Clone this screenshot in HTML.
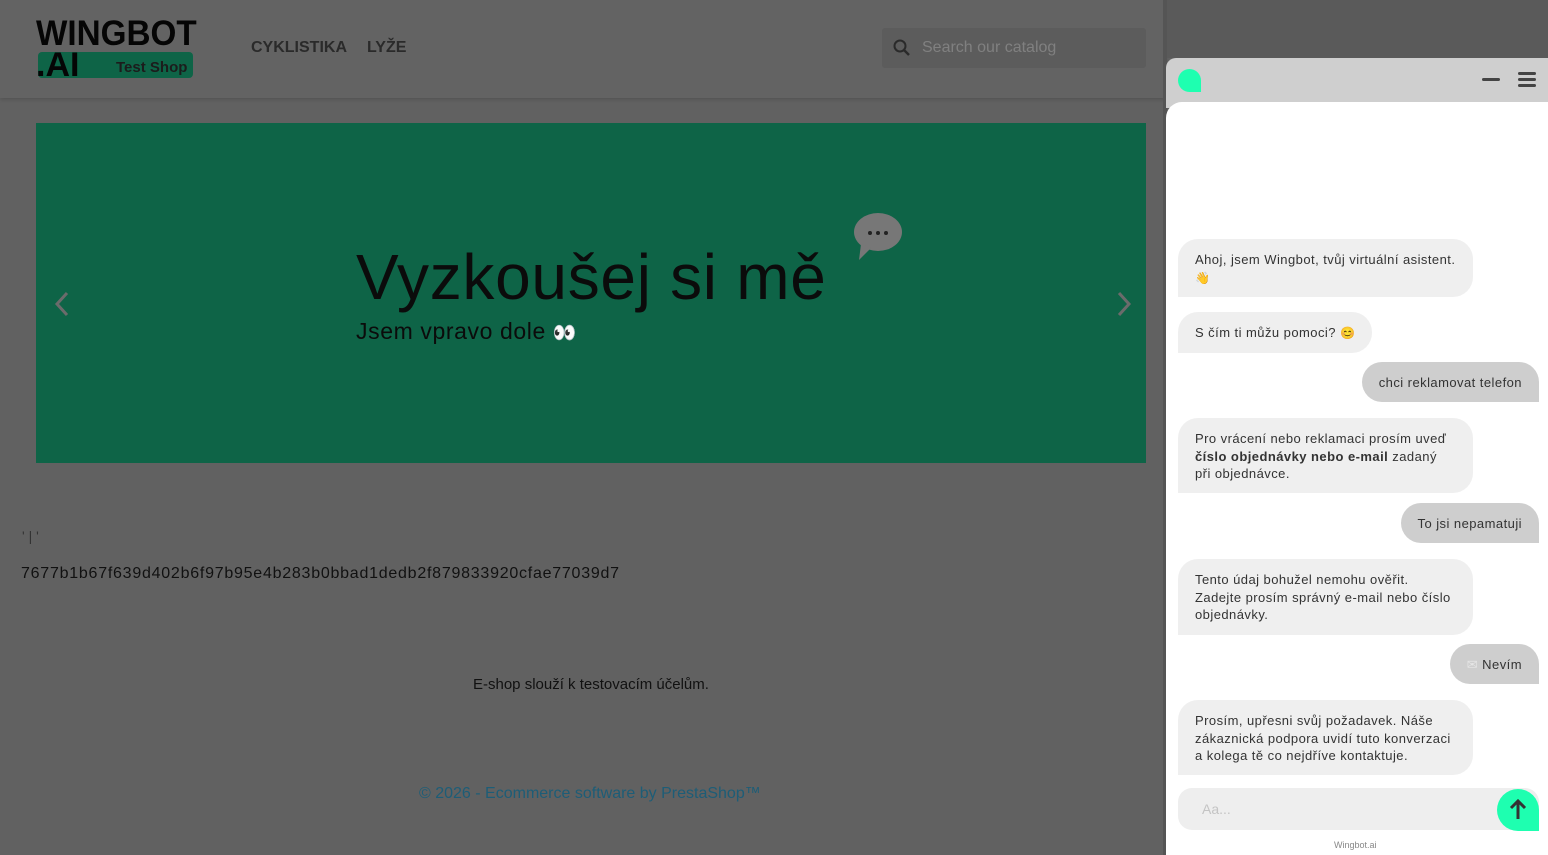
<!DOCTYPE html>
<html><head><meta charset="utf-8"><style>
*{margin:0;padding:0;box-sizing:border-box}
body{width:1548px;height:855px;overflow:hidden;background:#616161;font-family:"Liberation Sans",sans-serif;position:relative}
.hdr{position:absolute;left:0;top:0;width:1166px;height:98px;background:#636363;box-shadow:0 2px 3px rgba(0,0,0,.12)}
.logo1{position:absolute;left:36px;top:14px;font-size:35px;font-weight:bold;color:#050505;transform:scaleX(0.95);transform-origin:left}
.logobar{position:absolute;left:38px;top:52px;width:155px;height:26px;background:#0e6447;border-radius:4px}
.logoai{position:absolute;left:36px;top:46px;font-size:34px;font-weight:bold;color:#050505;height:32px;overflow:hidden;line-height:38px}
.logots{position:absolute;left:116px;top:59px;font-size:15px;font-weight:bold;color:#1c1c1c}
.nav{position:absolute;top:39px;font-size:16px;font-weight:bold;color:#2a2a2a}
.search{position:absolute;left:882px;top:28px;width:264px;height:40px;background:#5c5c5c;border-radius:3px}
.search span{position:absolute;left:40px;top:11px;font-size:16px;color:#808080}
.banner{position:absolute;left:36px;top:123px;width:1110px;height:340px;background:#0e6447}
.t1{position:absolute;left:356px;top:240px;font-size:64px;color:#0b0b0b;letter-spacing:0.7px}
.t2{position:absolute;left:356px;top:318px;font-size:23px;color:#0b0b0b;letter-spacing:0.6px}
.chatbg{position:absolute;left:1166px;top:0;width:382px;height:58px;background:#5a5a5a}
.edge{position:absolute;left:1163px;top:0;width:4px;height:855px;background:#555}
.chead{position:absolute;left:1166px;top:58px;width:382px;height:50px;background:#cfcfcf;border-top-left-radius:10px}
.cbody{position:absolute;left:1166px;top:102px;width:382px;height:753px;background:#fff;border-top-left-radius:16px}
.b{position:absolute;background:#efefef;color:#333;font-size:13px;letter-spacing:0.45px;line-height:17.5px;padding:12px 17px;border-radius:20px 20px 20px 0}
.u{position:absolute;background:#cecece;color:#333;font-size:13px;letter-spacing:0.45px;line-height:17px;padding:12px 17px;border-radius:20px 20px 0 20px;right:9px}
</style></head><body>
<div class="hdr">
<div class="logo1">WINGBOT</div>
<div class="logobar"></div>
<div class="logoai">.AI</div>
<div class="logots">Test Shop</div>
<div class="nav" style="left:251px">CYKLISTIKA</div>
<div class="nav" style="left:367px">LYŽE</div>
<div class="search"><svg style="position:absolute;left:10px;top:10px" width="20" height="20" viewBox="0 0 20 20"><circle cx="8" cy="8" r="5.5" fill="none" stroke="#2a2a2a" stroke-width="2"/><path d="M12 12l5 5" stroke="#2a2a2a" stroke-width="2.4"/></svg><span>Search our catalog</span></div>
</div>
<div class="banner"></div>
<div class="t1">Vyzkoušej si mě</div>
<div class="t2">Jsem vpravo dole <span style="font-size:19px">👀</span></div>
<svg style="position:absolute;left:853px;top:212px" width="50" height="50" viewBox="0 0 50 50"><ellipse cx="25" cy="20" rx="24" ry="19" fill="#777"/><path d="M8 32 L6 48 L18 36Z" fill="#777"/><circle cx="17" cy="21" r="2" fill="#222"/><circle cx="25" cy="21" r="2" fill="#222"/><circle cx="33" cy="21" r="2" fill="#222"/></svg>
<svg style="position:absolute;left:52px;top:290px" width="20" height="28"><path d="M15 3L5 14l10 11" fill="none" stroke="#6b6b6b" stroke-width="3"/></svg>
<svg style="position:absolute;left:1114px;top:290px" width="20" height="28"><path d="M5 3l10 11L5 25" fill="none" stroke="#6b6b6b" stroke-width="3"/></svg>
<div style="position:absolute;left:22px;top:528px;font-size:14px;color:#333">' | '</div>
<div style="position:absolute;left:21px;top:565px;font-size:16px;color:#111;letter-spacing:0.75px">7677b1b67f639d402b6f97b95e4b283b0bbad1dedb2f879833920cfae77039d7</div>
<div style="position:absolute;left:473px;top:676px;font-size:15px;color:#111">E-shop slouží k testovacím účelům.</div>
<div style="position:absolute;left:419px;top:785px;font-size:16px;color:#1d5d77">© 2026 - Ecommerce software by PrestaShop™</div>
<div class="chatbg"></div>
<div class="edge"></div>
<div class="chead">
<div style="position:absolute;left:12px;top:11px;width:23px;height:23px;background:#1effb0;border-radius:12px 12px 0 12px"></div>
<div style="position:absolute;left:316px;top:20px;width:18px;height:3px;background:#444;border-radius:2px"></div>
<div style="position:absolute;left:352px;top:14px;width:18px;height:3px;background:#444;border-radius:2px"></div>
<div style="position:absolute;left:352px;top:20px;width:18px;height:3px;background:#444;border-radius:2px"></div>
<div style="position:absolute;left:352px;top:26px;width:18px;height:3px;background:#444;border-radius:2px"></div>
</div>
<div class="cbody"></div>
<div class="b" style="left:1178px;top:239px;width:295px;height:58px">Ahoj, jsem Wingbot, tvůj virtuální asistent.<br><span style="font-size:12px">👋</span></div>
<div class="b" style="left:1178px;top:312px;height:41px">S čím ti můžu pomoci? <span style="font-size:12px">😊</span></div>
<div class="u" style="top:362px;height:40px">chci reklamovat telefon</div>
<div class="b" style="left:1178px;top:418px;width:295px;height:75px">Pro vrácení nebo reklamaci prosím uveď <b>číslo objednávky nebo e-mail</b> zadaný při objednávce.</div>
<div class="u" style="top:503px;height:40px">To jsi nepamatuji</div>
<div class="b" style="left:1178px;top:559px;width:295px;height:76px">Tento údaj bohužel nemohu ověřit. Zadejte prosím správný e-mail nebo číslo objednávky.</div>
<div class="u" style="top:644px;height:40px"><span style="color:#e6e6e6">✉</span> Nevím</div>
<div class="b" style="left:1178px;top:700px;width:295px;height:75px">Prosím, upřesni svůj požadavek. Náše zákaznická podpora uvidí tuto konverzaci a kolega tě co nejdříve kontaktuje.</div>
<div style="position:absolute;left:1178px;top:788px;width:361px;height:42px;background:#eee;border-radius:14px"><span style="position:absolute;left:24px;top:13px;font-size:14px;color:#c4c4c4">Aa...</span></div>
<div style="position:absolute;left:1497px;top:789px;width:42px;height:42px;background:#1effb0;border-radius:21px 21px 0 21px"><svg width="42" height="42"><path d="M21 30V13M14 19l7-7 7 7" fill="none" stroke="#333" stroke-width="3"/></svg></div>
<div style="position:absolute;left:1334px;top:840px;font-size:9px;color:#888">Wingbot.ai</div>
</body></html>
